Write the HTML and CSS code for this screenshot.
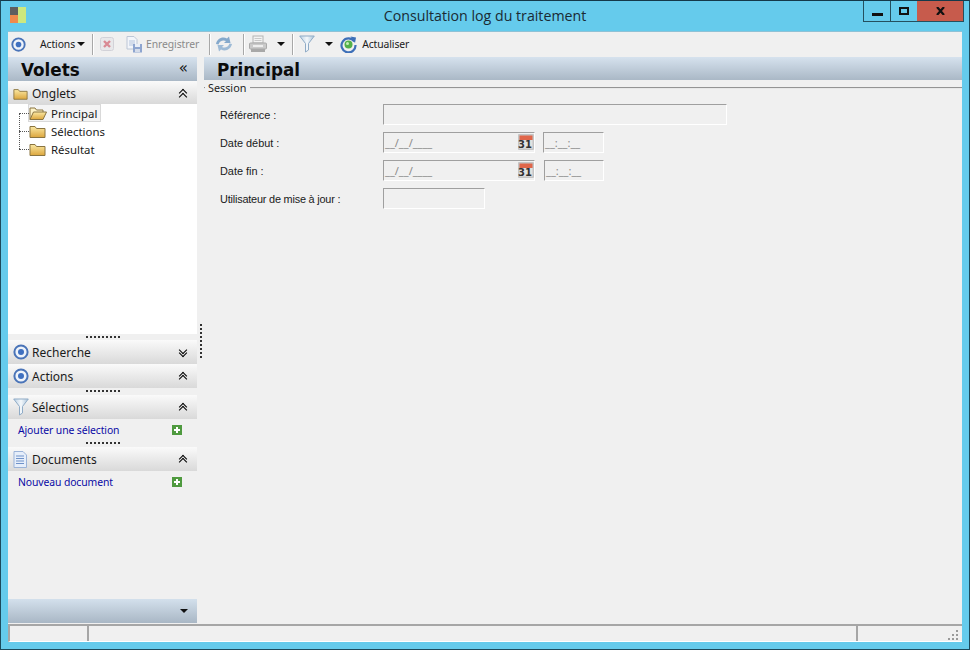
FILE: index.html
```html
<!DOCTYPE html>
<html lang="fr">
<head>
<meta charset="utf-8">
<title>Consultation log du traitement</title>
<link rel="stylesheet" href="styles.css">
</head>
<body>
<svg class="defs" width="0" height="0">
  <defs>
    <linearGradient id="gFolder" x1="0" y1="0" x2="0" y2="1"><stop offset="0" stop-color="#fbe9a4"/><stop offset="1" stop-color="#dca63d"/></linearGradient>
    <linearGradient id="gFunnel" x1="0" y1="0" x2="1" y2="0"><stop offset="0" stop-color="#b9cfe4"/><stop offset=".5" stop-color="#f4f8fb"/><stop offset="1" stop-color="#a9c3da"/></linearGradient>
    <symbol id="i-target" viewBox="0 0 16 16"><circle cx="8" cy="8" r="6.600" fill="#eef3fa" stroke="#4a74b8" stroke-width="2"/><circle cx="8" cy="8" r="3" fill="#3f70c0"/></symbol>
    <symbol id="i-folder" viewBox="0 0 17 15"><path d="M1 13.500V2.500h5l1.500 2H16v9z" fill="url(#gFolder)" stroke="#8a7440"/></symbol>
    <symbol id="i-folder-open" viewBox="0 0 18 15"><path d="M1 13.500V2h5l1.500 2H14v2.500" fill="#fdf3c8" stroke="#8a7440"/><path d="M1 13.500l3.500-7.500H17.500l-3.500 7.500z" fill="url(#gFolder)" stroke="#8a7440"/></symbol>
    <symbol id="i-funnel" viewBox="0 0 16 18"><path d="M.7 1h14.600L9.500 8.500V15l-3 2V8.500z" fill="url(#gFunnel)" stroke="#8fabc6"/></symbol>
    <symbol id="i-doc" viewBox="0 0 14 17"><path d="M1 .5h9L13.500 4v12.500H1z" fill="#e6eefa" stroke="#9bb3d8"/><path d="M3 5h8M3 7.500h8M3 10h8M3 12.500h8" stroke="#6f92c9"/></symbol>
    <symbol id="i-plus" viewBox="0 0 10 10"><rect width="10" height="10" fill="#4f9a3f"/><path d="M5 2v6M2 5h6" stroke="#fff" stroke-width="2"/></symbol>
    <symbol id="i-cal" viewBox="0 0 16 16"><rect width="16" height="16" rx="1" fill="#c4c4c4"/><rect x="1.500" y="1.500" width="13" height="4.500" fill="#e0664a"/><rect x="1.500" y="6" width="13" height="8.500" fill="#e2e2e2"/></symbol>
  </defs>
</svg>
<div class="window">
  <header class="titlebar">
    <svg class="app-icon" width="16" height="16" viewBox="0 0 16 16"><rect width="8" height="8" fill="#5f5f5f"/><rect y="8" width="8" height="8" fill="#f08a4b"/><rect x="8" width="8" height="16" fill="#cde87f"/></svg>
    <h1 class="title">Consultation log du traitement</h1>
    <div class="win-buttons">
      <button class="win-btn win-min" aria-label="Réduire"><svg width="11" height="4"><rect width="11" height="3" y="1" fill="#111"/></svg></button>
      <button class="win-btn win-max" aria-label="Agrandir"><svg width="10" height="8"><rect x="1" y="1" width="8" height="6" fill="none" stroke="#111" stroke-width="2"/></svg></button>
      <button class="win-btn win-close" aria-label="Fermer"><svg width="9" height="8"><path d="M1 0l7 8M8 0L1 8" stroke="#111" stroke-width="2.200"/></svg></button>
    </div>
  </header>

  <div class="toolbar">
    <svg class="tb-target" width="15" height="15"><use href="#i-target"/></svg>
    <span class="tb-text tb-actions">Actions</span><span class="caret tb-caret-a"></span>
    <span class="tb-sep tb-sep-1"></span>
    <svg class="tb-del" width="14" height="14" viewBox="0 0 14 14"><rect x=".5" y=".5" width="13" height="13" rx="2" fill="#e8e8ea" stroke="#d2d2d8"/><path d="M4 4l6 6M10 4l-6 6" stroke="#d98a94" stroke-width="2.400"/></svg>
    <svg class="tb-save" width="17" height="17" viewBox="0 0 17 17"><path d="M1 .5h7L11 3.500V13H1z" fill="#f2f5fa" stroke="#bcc6d6"/><path d="M3 5h6M3 7h6M3 9h5" stroke="#b5c4dc"/><rect x="7" y="8" width="9" height="8.500" fill="#8ea5cf"/><rect x="9" y="8" width="5" height="3" fill="#e9eef7"/><rect x="9" y="13" width="5" height="3" fill="#d4dcea"/></svg>
    <span class="tb-text tb-disabled tb-enreg">Enregistrer</span>
    <span class="tb-sep tb-sep-2"></span>
    <svg class="tb-sync" width="16" height="16" viewBox="0 0 16 16"><path d="M0 8C1 3 6 0 11 2.500L13 .5l1.500 6.500-6.500 0 2-2C7 3.500 3.500 5 2.500 8.500z" fill="#85a9cc"/><path d="M16 8c-1 5-6 8-11 5.500L3 15.500 1.500 9l6.500 0-2 2c3 1.500 6.500 0 7.500-3.500z" fill="#9dbad6"/></svg>
    <span class="tb-sep tb-sep-3"></span>
    <svg class="tb-print" width="18" height="18" viewBox="0 0 18 18"><rect x="4" y="1" width="10" height="7" fill="#f3f3f3" stroke="#b4b4b4"/><path d="M5.500 3.500h7M5.500 5.500h7" stroke="#c8c8c8"/><rect x=".5" y="8" width="17" height="6" rx="1" fill="#c9c9c9" stroke="#a9a9a9"/><rect x="2" y="14" width="14" height="3" fill="#a8a8a8"/><rect x="4" y="10" width="10" height="2" fill="#ededed"/></svg>
    <span class="caret tb-caret-p"></span>
    <span class="tb-sep tb-sep-4"></span>
    <svg class="tb-funnel" width="16" height="18"><use href="#i-funnel"/></svg>
    <span class="caret tb-caret-f"></span>
    <svg class="tb-refresh" width="17" height="17" viewBox="0 0 17 17"><path d="M14.300 5.500A7 7 0 1 0 15.500 9" fill="none" stroke="#3d6fb8" stroke-width="2.200"/><path d="M10.500 0.500L16 1.500 15 7z" fill="#3d6fb8"/><circle cx="8.500" cy="8.500" r="4" fill="#53b04a"/><circle cx="7.500" cy="7.500" r="1.500" fill="#c5eeba"/></svg>
    <span class="tb-text tb-actual">Actualiser</span>
  </div>

  <div class="main">
    <aside class="side">
      <div class="panel-head side-head"><span class="panel-title">Volets</span><span class="chev-h">«</span></div>
      <section class="group-head group-first">
        <svg class="g-icon" width="15" height="14" viewBox="0 0 17 15"><use href="#i-folder"/></svg>
        <span class="g-label">Onglets</span>
        <span class="chev chev-up"></span>
      </section>
      <div class="tree">
        <div class="tree-row tree-sel"><svg width="18" height="15"><use href="#i-folder-open"/></svg><span class="tree-text">Principal</span></div>
        <div class="tree-row"><svg width="17" height="15"><use href="#i-folder"/></svg><span class="tree-text">Sélections</span></div>
        <div class="tree-row"><svg width="17" height="15"><use href="#i-folder"/></svg><span class="tree-text">Résultat</span></div>
      </div>
      <div class="grip"></div>
      <section class="group-head">
        <svg class="g-icon" width="16" height="16"><use href="#i-target"/></svg>
        <span class="g-label">Recherche</span>
        <span class="chev chev-down"></span>
      </section>
      <section class="group-head">
        <svg class="g-icon" width="16" height="16"><use href="#i-target"/></svg>
        <span class="g-label">Actions</span>
        <span class="chev chev-up"></span>
      </section>
      <div class="grip grip-a"></div>
      <section class="group-head">
        <svg class="g-icon" width="16" height="18"><use href="#i-funnel"/></svg>
        <span class="g-label">Sélections</span>
        <span class="chev chev-up"></span>
      </section>
      <div class="link-row"><a class="link">Ajouter une sélection</a><svg width="10" height="10"><use href="#i-plus"/></svg></div>
      <div class="grip grip-b"></div>
      <section class="group-head">
        <svg class="g-icon" width="14" height="17"><use href="#i-doc"/></svg>
        <span class="g-label">Documents</span>
        <span class="chev chev-up"></span>
      </section>
      <div class="link-row"><a class="link">Nouveau document</a><svg width="10" height="10"><use href="#i-plus"/></svg></div>
      <div class="side-fill"></div>
      <div class="side-foot"><span class="caret"></span></div>
    </aside>

    <div class="splitter"><span class="split-grip"></span></div>

    <main class="content">
      <div class="panel-head content-head"><span class="panel-title">Principal</span></div>
      <fieldset class="session">
        <legend>Session</legend>
        <div class="form">
          <label>Référence :</label>
          <div class="fields"><span class="field f-ref"></span></div>
          <label>Date début :</label>
          <div class="fields"><span class="field f-date">__/__/____<svg class="cal" width="16" height="16"><use href="#i-cal"/></svg><b class="cal-num">31</b></span><span class="field f-time">__:__:__</span></div>
          <label>Date fin :</label>
          <div class="fields"><span class="field f-date">__/__/____<svg class="cal" width="16" height="16"><use href="#i-cal"/></svg><b class="cal-num">31</b></span><span class="field f-time f-time-2">__:__:__</span></div>
          <label class="label-long">Utilisateur de mise à jour :</label>
          <div class="fields"><span class="field f-user"></span></div>
        </div>
      </fieldset>
    </main>
  </div>

  <footer class="status">
    <span class="st st-1"></span>
    <span class="st st-2"></span>
    <span class="st st-3">
      <svg class="resize" width="12" height="11" viewBox="0 0 12 11"><path d="M9 0h2v2H9zM5 4h2v2H5zM9 4h2v2H9zM1 8h2v2H1zM5 8h2v2H5zM9 8h2v2H9z" fill="#9a9a9a"/></svg>
    </span>
  </footer>
</div>
</body>
</html>
```
FILE: styles.css
```css
* { box-sizing: border-box; }
html, body { margin: 0; padding: 0; }
body { width: 970px; height: 650px; overflow: hidden; font-family: "Noto Sans", "Liberation Sans", sans-serif; font-size: 11.500px; color: #111; }
.defs { position: absolute; }

.window { width: 970px; height: 650px; display: flex; flex-direction: column; background: #65cbec; border: 1px solid #1c4a5c; border-top-color: #14394a; padding: 0 7px 7px; }

.titlebar { height: 30px; flex: none; display: grid; grid-template-columns: 1fr auto 1fr; align-items: start; margin: 0 -7px; }
.app-icon { margin: 6px 0 0 9px; }
.title { margin: 6px 0 0; font: 400 14.200px/18px "Open Sans", "Noto Sans", sans-serif; color: #1a2a33; }
.win-buttons { display: flex; justify-self: end; margin-right: 5px; height: 21px; border: 1px solid #24505f; border-top: 0; }
.win-btn { padding: 0; border: 0; background: transparent; display: flex; align-items: center; justify-content: center; }
.win-min { width: 27px; border-right: 1px solid #24505f; padding-top: 5px; }
.win-max { width: 26px; padding-bottom: 1px; }
.win-close { width: 46px; background: #c75b4c; }

.toolbar { height: 26px; flex: none; display: flex; align-items: center; background: #f0f0f0; border-top: 1px solid #8fc2d6; padding: 0 0 1px 3px; }
.tb-text { font-size: 10.400px; letter-spacing: -.1px; color: #1a1a1a; white-space: nowrap; }
.tb-disabled { color: #8a8a8a; }
.tb-actions { margin-left: 14px; }
.tb-caret-a { margin-left: 2px; }
.tb-sep { width: 1px; height: 21px; background: #a8a8a8; box-shadow: 1px 0 0 #fff; }
.tb-sep-1 { margin-left: 7px; }
.tb-del { margin-left: 7px; }
.tb-save { margin-left: 12px; }
.tb-enreg { margin-left: 3px; }
.tb-sep-2 { margin-left: 10px; }
.tb-sync { margin-left: 6px; }
.tb-sep-3 { margin-left: 11px; }
.tb-print { margin-left: 5px; }
.tb-caret-p { margin-left: 10px; }
.tb-sep-4 { margin-left: 7px; }
.tb-funnel { margin-left: 6px; }
.tb-caret-f { margin-left: 10px; }
.tb-refresh { margin-left: 7px; }
.tb-actual { margin-left: 5px; }
.caret { display: inline-block; width: 0; height: 0; border-left: 4px solid transparent; border-right: 4px solid transparent; border-top: 4px solid #111; }

.main { flex: 1; min-height: 0; display: flex; background: #f0f0f0; }
.side { width: 189px; flex: none; display: flex; flex-direction: column; }
.panel-head { height: 24px; flex: none; display: flex; align-items: center; background: linear-gradient(#d6e2ee, #aab8c6); }
.panel-title { font: 700 16.800px/24px "DejaVu Sans", sans-serif; color: #0b0b0b; padding-top: 1px; }
.side-head { padding-left: 13px; justify-content: space-between; padding-right: 9px; }
.chev-h { font: 400 15px/20px "DejaVu Sans", sans-serif; color: #111; margin-top: -2px; }

.group-head { height: 24px; flex: none; display: flex; align-items: center; background: linear-gradient(#fafafa, #d9d9d9); padding: 0 11px 0 5px; font-size: 12px; }
.group-first { height: 23px; padding-top: 2px; }
.g-icon { flex: none; }
.group-head .g-icon { margin-right: auto; }
.g-label { position: absolute; margin-left: 19px; color: #1a1a1a; }
.chev { width: 7px; height: 9px; position: relative; display: block; }
.chev::before, .chev::after { content: ""; position: absolute; left: 1px; width: 5px; height: 5px; border-left: 1.800px solid #000; border-top: 1.800px solid #000; transform: rotate(45deg); }
.chev::before { top: 1px; }
.chev::after { top: 4.500px; }
.chev-down::before, .chev-down::after { transform: rotate(225deg); }
.chev-down::before { top: -1px; }
.chev-down::after { top: 2.500px; }

.tree { height: 230px; flex: none; background: #fff; position: relative; padding: 0 0 0 20px; }
.tree::before { content: ""; position: absolute; left: 11px; top: 9px; height: 36px; border-left: 1px dotted #555; }
.tree-row { height: 18px; display: flex; align-items: center; position: relative; font-size: 11.400px; color: #1a1a1a; padding-left: 1px; }
.tree-row::before { content: ""; position: absolute; left: -9px; top: 9px; width: 10px; border-top: 1px dotted #555; }
.tree-text { margin-left: 5px; }
.tree-sel { width: 73px; background: #f4f4f4; box-shadow: inset 0 0 0 1px #d9d9d9; }
.tree-sel .tree-text { margin-left: 4px; }

.grip { height: 6px; flex: none; background-image: repeating-linear-gradient(90deg, #333 0 2px, transparent 2px 4px); background-size: 34px 2px; background-position: 78px 2px; background-repeat: no-repeat; }
.grip-a { height: 7px; }
.grip-b { background-position: 78px 1px; }

.link-row { height: 22px; flex: none; display: flex; align-items: center; justify-content: space-between; padding: 0 15px 0 10px; }
.link { color: #0a0aa5; font-size: 10.400px; letter-spacing: -.1px; }
.side-fill { flex: 1; }
.side-foot { height: 24px; margin-bottom: 1px; flex: none; display: flex; align-items: center; justify-content: flex-end; padding-right: 9px; background: linear-gradient(#d3e0ec, #a9b7c5); }

.splitter { width: 7px; flex: none; display: flex; align-items: center; justify-content: center; }
.split-grip { width: 0; height: 34px; border-left: 2px dotted #333; }

.content { flex: 1; min-width: 0; display: flex; flex-direction: column; }
.content-head { padding: 1px 0 0 13px; height: 23px; }
.session { margin: 1px 0 0 0; padding: 0 0 0 16px; border: 0; border-top: 2px groove #e8e8e8; min-width: 0; }
.session legend { padding: 0 4px 0 3px; margin-left: -15px; font-size: 10.800px; line-height: 14px; color: #222; }
.form { display: grid; grid-template-columns: 163px 1fr; row-gap: 7px; padding-top: 9px; }
.form label { height: 21px; font: 10.900px/23px "Liberation Sans", sans-serif; color: #1a1a1a; }
.form .label-long { letter-spacing: -.2px; }
.fields { display: flex; gap: 8px; height: 21px; }
.field { display: block; height: 21px; background: #f0f0f0; border: 1px solid; border-color: #9f9f9f #fff #fff #9f9f9f; position: relative; font-size: 11px; line-height: 20px; color: #8a8a8a; padding-left: 1px; white-space: nowrap; }
.f-ref { width: 344px; }
.f-date { width: 152px; }
.f-time { width: 61px; }
.f-time-2 { margin-left: 1px; width: 60px; }
.f-user { width: 102px; }
.cal { position: absolute; right: 0; top: 1px; }
.cal-num { position: absolute; right: 2px; top: 4px; font: 700 10px/16px "DejaVu Sans", sans-serif; color: #333; }

.status { height: 18px; flex: none; display: flex; background: #f0f0f0; border-top: 2px solid #a6a6a6; border-bottom: 1px solid #fff; border-left: 2px solid #a6a6a6; }
.st { display: block; height: 100%; position: relative; }
.st-1 { width: 79px; border-right: 2px solid #a6a6a6; }
.st-2 { flex: 1; border-right: 2px solid #a6a6a6; }
.st-3 { width: 104px; }
.resize { position: absolute; right: 3px; top: 4px; }
```
